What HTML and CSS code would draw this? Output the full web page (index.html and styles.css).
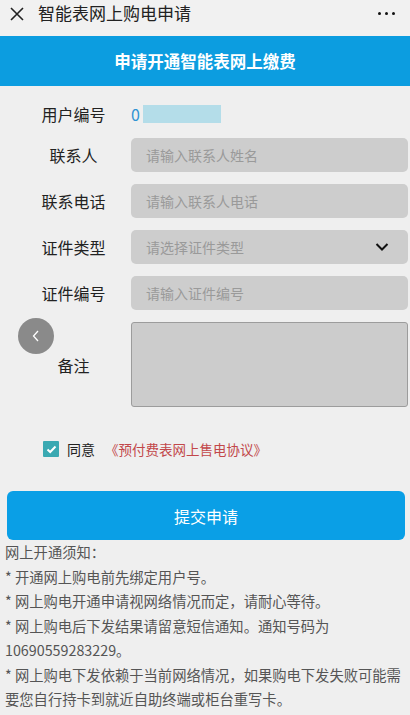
FILE: index.html
```html
<!DOCTYPE html>
<html lang="zh">
<head>
<meta charset="utf-8">
<link rel="stylesheet" href="styles.css">
</head>
<body>
<div class="topbar">
  <svg class="close" width="16" height="16" viewBox="0 0 16 16"><path d="M2 2L14 14M14 2L2 14" stroke="#222" stroke-width="1.6" fill="none"/></svg>
  <div class="title">智能表网上购电申请</div>
  <div class="more"><span></span><span></span><span></span></div>
</div>
<div class="banner">申请开通智能表网上缴费</div>
<div class="form">
  <div class="row row-id">
    <div class="label">用户编号</div>
    <div class="idval"><span class="num">0</span><span class="mask"></span></div>
  </div>
  <div class="row">
    <div class="label">联系人</div>
    <div class="field">请输入联系人姓名</div>
  </div>
  <div class="row">
    <div class="label">联系电话</div>
    <div class="field">请输入联系人电话</div>
  </div>
  <div class="row">
    <div class="label">证件类型</div>
    <div class="field select">请选择证件类型
      <svg width="14" height="10" viewBox="0 0 14 10"><path d="M1.5 2L7 7.5L12.5 2" stroke="#111" stroke-width="2" fill="none"/></svg>
    </div>
  </div>
  <div class="row">
    <div class="label">证件编号</div>
    <div class="field">请输入证件编号</div>
  </div>
  <div class="row row-note">
    <div class="label">备注</div>
    <div class="area"></div>
  </div>
  <div class="agree">
    <span class="check"><svg width="11" height="9" viewBox="0 0 11 9"><path d="M1.5 4.5L4.2 7L9.5 1.5" stroke="#fff" stroke-width="2" fill="none"/></svg></span>
    <span class="agree-text">同意</span>
    <span class="link">《预付费表网上售电协议》</span>
  </div>
</div>
<div class="submit-wrap"><div class="submit">提交申请</div></div>
<div class="notes">
  <p>网上开通须知：</p>
  <p>* 开通网上购电前先绑定用户号。</p>
  <p>* 网上购电开通申请视网络情况而定，请耐心等待。</p>
  <p>* 网上购电后下发结果请留意短信通知。通知号码为10690559283229。</p>
  <p>* 网上购电下发依赖于当前网络情况，如果购电下发失败可能需要您自行持卡到就近自助终端或柜台重写卡。</p>
</div>
<div class="back"><svg width="12" height="16" viewBox="0 0 12 16"><path d="M8 3L3.5 8L8 13" stroke="#fff" stroke-width="1.3" fill="none"/></svg></div>
</body>
</html>
```
FILE: styles.css
```css
* { box-sizing: border-box; }
html, body { margin: 0; padding: 0; }
body {
  width: 410px;
  min-height: 715px;
  background: #efefef;
  font-family: "Noto Sans CJK SC", "Noto Sans", sans-serif;
  color: #222;
  position: relative;
  overflow: hidden;
}
.topbar {
  height: 36px;
  background: #f1f1f1;
  display: flex;
  align-items: flex-start;
  padding: 0 0 0 9px;
}
.close { margin-top: 6px; }
.title {
  font-size: 17px;
  line-height: 26px;
  margin-left: 13px;
  color: #222;
}
.more {
  margin-left: auto;
  margin-right: 15px;
  margin-top: 12px;
  display: flex;
  gap: 4px;
}
.more span {
  width: 3px; height: 3px; border-radius: 50%; background: #111;
}
.banner {
  height: 50px;
  background: #0c9de0;
  color: #fff;
  font-weight: bold;
  font-size: 16.5px;
  display: flex;
  align-items: center;
  justify-content: center;
}
.form { padding: 11px 2px 0 0; }
.row {
  display: grid;
  grid-template-columns: 131px 1fr;
  align-items: center;
  margin-bottom: 12px;
}
.row-id { height: 34px; margin-bottom: 7px; }
.label {
  font-size: 16px;
  text-align: center;
  padding-left: 16px;
  color: #222;
}
.idval { display: flex; align-items: center; }
.num { color: #2f93d3; font-size: 16px; }
.mask {
  width: 78px; height: 18px; background: #b4dde9; margin-left: 3px;
}
.field {
  height: 34px;
  background: #cdcdcd;
  border-radius: 5px;
  color: #9a9a9a;
  font-size: 14px;
  padding-left: 15px;
  display: flex;
  align-items: center;
}
.select { justify-content: space-between; padding-right: 19px; }
.row-note { margin-bottom: 0; margin-top: 1px; }
.area {
  height: 85px;
  background: #cccccc;
  border: 1px solid #9c9c9c;
  border-radius: 3px;
}
.agree {
  display: flex;
  align-items: center;
  padding-left: 43px;
  margin-top: 34px;
  height: 16px;
}
.check {
  width: 16px; height: 16px; background: #3aa9b2; border-radius: 1px;
  display: flex; align-items: center; justify-content: center;
}
.agree-text { font-size: 14px; margin-left: 8px; color: #222; }
.link { font-size: 13.5px; color: #c2474a; margin-left: 10px; }
.submit-wrap { padding: 0 5px 0 7px; margin-top: 34px; }
.submit {
  height: 49px;
  background: #0a9fe6;
  border-radius: 6px;
  color: #fff;
  font-size: 16px;
  display: flex; align-items: center; justify-content: center;
}
.notes {
  padding: 0 6px 0 5px;
  margin-top: 0;
  font-size: 14.3px;
  line-height: 24.5px;
  color: #555;
}
.notes p { margin: 0; }
.back {
  position: absolute;
  left: 18px; top: 318px;
  width: 36px; height: 36px;
  border-radius: 50%;
  background: #8a8a8a;
  display: flex; align-items: center; justify-content: center;
}
```
